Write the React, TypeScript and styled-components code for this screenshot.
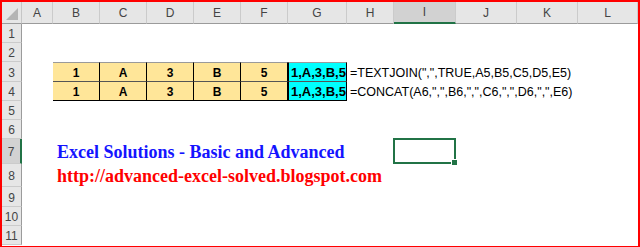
import React from 'react'
import styled, { createGlobalStyle } from 'styled-components'

const GlobalStyle = createGlobalStyle`
  html, body {
    margin: 0;
    padding: 0;
    background: #fff;
  }
`

const columns = ['A', 'B', 'C', 'D', 'E', 'F', 'G', 'H', 'I', 'J', 'K', 'L']
const colWidths = [31, 47, 47, 47, 47, 47, 59, 47, 62, 61, 61, 60]
const rowHeights = [19, 19, 20, 19, 19, 19, 25, 23, 20, 19, 19]
const values = ['1', 'A', '3', 'B', '5']

const ACTIVE_COL = 'I'
const ACTIVE_ROW = 7

const Frame = styled.div`
  width: 640px;
  height: 247px;
  box-sizing: border-box;
  border: 2px solid #ff0000;
  border-bottom-width: 1px;
  overflow: hidden;
  background: #fff;
`

const Sheet = styled.div`
  display: grid;
  grid-template-columns: 20px ${colWidths.map((w) => `${w}px`).join(' ')};
  grid-template-rows: 22px ${rowHeights.map((h) => `${h}px`).join(' ')};
  font-family: 'Liberation Sans', Arial, sans-serif;
`

const Corner = styled.div`
  grid-column: 1;
  grid-row: 1;
  position: relative;
  background: #e6e6e6;
  border-right: 1px solid #c6c6c6;
  border-bottom: 1px solid #9b9b9b;
  &::after {
    content: '';
    position: absolute;
    right: 3px;
    bottom: 3px;
    width: 0;
    height: 0;
    border-left: 12px solid transparent;
    border-bottom: 12px solid #b4b4b4;
  }
`

const ColHead = styled.div<{ $active?: boolean }>`
  grid-row: 1;
  display: flex;
  align-items: center;
  justify-content: center;
  background: ${(p) => (p.$active ? '#d2d2d2' : '#e6e6e6')};
  color: #444;
  font-size: 12px;
  border-right: 1px solid #cbcbcb;
  border-bottom: ${(p) => (p.$active ? '2px solid #217346' : '1px solid #9b9b9b')};
  box-sizing: border-box;
`

const RowHead = styled.div<{ $row: number; $active?: boolean }>`
  grid-column: 1;
  grid-row: ${(p) => p.$row + 1};
  display: flex;
  align-items: center;
  justify-content: center;
  background: ${(p) => (p.$active ? '#d2d2d2' : '#e6e6e6')};
  color: #444;
  font-size: 12px;
  padding-top: 2px;
  border-bottom: 1px solid #cbcbcb;
  border-right: ${(p) => (p.$active ? '2px solid #217346' : '1px solid #9b9b9b')};
  box-sizing: border-box;
`

const DataCell = styled.div<{ $row: number; $col: number; $first?: boolean }>`
  grid-row: ${(p) => p.$row + 1};
  grid-column: ${(p) => p.$col + 2};
  display: flex;
  align-items: center;
  justify-content: center;
  background: #ffe699;
  font-size: 12px;
  font-weight: 700;
  color: #000;
  border-right: 1px solid #000;
  border-bottom: 1px solid ${(p) => (p.$first ? '#555' : '#000')};
  border-top: ${(p) => (p.$first ? '1px solid #9a9a9a' : 'none')};
  box-sizing: border-box;
  padding-top: 1px;
`

const ResultCell = styled(DataCell)`
  justify-content: flex-start;
  padding-left: 2px;
  background: #00ffff;
  font-size: 13px;
  border-left: 1px solid #000;
`

const Formula = styled.div<{ $row: number }>`
  grid-row: ${(p) => p.$row + 1};
  grid-column: 9 / span 5;
  display: flex;
  align-items: center;
  padding-left: 3px;
  padding-top: 1px;
  font-size: 12.5px;
  color: #000;
  white-space: nowrap;
`

const Banner = styled.div<{ $row: number; $color: string }>`
  grid-row: ${(p) => p.$row + 1};
  grid-column: 3 / span 8;
  display: flex;
  align-items: flex-end;
  padding-left: 4px;
  padding-bottom: ${(p) => (p.$row === 7 ? '1px' : '0')};
  font-family: 'Liberation Serif', 'Times New Roman', serif;
  font-weight: 700;
  font-size: 18px;
  color: ${(p) => p.$color};
  white-space: nowrap;
`

const Selection = styled.div`
  grid-row: ${ACTIVE_ROW + 1};
  grid-column: ${columns.indexOf(ACTIVE_COL) + 2};
  position: relative;
  margin: -1px 0 0 -1px;
  border: 2px solid #217346;
  &::after {
    content: '';
    position: absolute;
    right: -4px;
    bottom: -4px;
    width: 5px;
    height: 5px;
    background: #217346;
    border: 1px solid #fff;
  }
`

export default function App() {
  return (
    <>
      <GlobalStyle />
      <Frame>
        <Sheet>
          <Corner />
          {columns.map((c) => (
            <ColHead key={c} $active={c === ACTIVE_COL}>
              {c}
            </ColHead>
          ))}
          {rowHeights.map((_, i) => (
            <RowHead key={i} $row={i + 1} $active={i + 1 === ACTIVE_ROW}>
              {i + 1}
            </RowHead>
          ))}

          {[3, 4].map((row) => (
            <React.Fragment key={row}>
              {values.map((v, i) => (
                <DataCell key={i} $row={row} $col={i + 1} $first={row === 3}>
                  {v}
                </DataCell>
              ))}
              <ResultCell $row={row} $col={6} $first={row === 3}>
                {values.join(',')}
              </ResultCell>
            </React.Fragment>
          ))}

          <Formula $row={3}>=TEXTJOIN(",",TRUE,A5,B5,C5,D5,E5)</Formula>
          <Formula $row={4}>=CONCAT(A6,",",B6,",",C6,",",D6,",",E6)</Formula>

          <Banner $row={7} $color="#1414ff">
            Excel Solutions - Basic and Advanced
          </Banner>
          <Banner $row={8} $color="#ff0000">
            http://advanced-excel-solved.blogspot.com
          </Banner>

          <Selection />
        </Sheet>
      </Frame>
    </>
  )
}
